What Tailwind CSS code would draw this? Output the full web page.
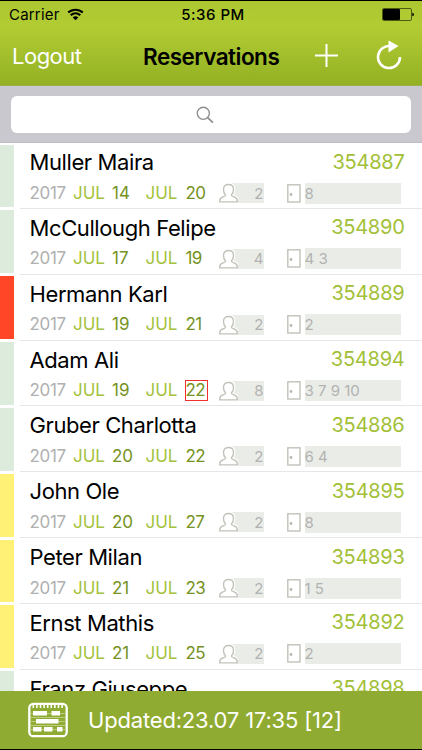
<!DOCTYPE html>
<html lang="en">
<head>
<meta charset="utf-8">
<title>Reservations</title>
<script src="https://cdn.jsdelivr.net/npm/@tailwindcss/browser@4"></script>
</head>
<body class="w-[422px] h-[750px] overflow-hidden bg-white font-[Inter,'Liberation_Sans',sans-serif] text-black">
<div class="flex flex-col w-[422px] h-[750px] border-y border-black overflow-hidden">
  <header class="shrink-0 h-[85px] bg-linear-to-b from-[#abc62f] via-[#b2cd33] via-30% to-[#93b023] border-b border-[#9caf4c]">
    <div class="h-[27px] grid grid-cols-3 items-center pl-[9px] pr-[8px] text-[15px] leading-none">
      <div class="flex items-center gap-[7px]">
        <span class="tracking-[0.2px]">Carrier</span>
        <svg class="w-[17px] h-[13px] -mt-px" viewBox="0 0 17 13" fill="none" stroke="#000" stroke-width="2.1"><path d="M1.2 4.6C5.3.7 11.7.7 15.8 4.6M3.7 7.2c2.8-2.5 6.8-2.5 9.6 0"/><path d="M8.5 12.2 5.7 9.4c1.6-1.4 4-1.4 5.6 0z" fill="#000" stroke="none"/></svg>
      </div>
      <span class="text-center font-medium tracking-[0.5px] whitespace-nowrap pl-[3px]">5:36 PM</span>
      <div class="flex justify-end">
        <svg class="w-[32px] h-[13px]" viewBox="0 0 32 13"><rect x=".5" y=".5" width="29" height="12" rx="1.5" fill="none" stroke="#4d5b12"/><rect x="1" y="1" width="17" height="11" rx="1"/><path d="M30.3 4.7q1.7 0 1.7 1.8t-1.7 1.8z"/></svg>
      </div>
    </div>
    <div class="h-[57px] flex items-center pl-[12px] pr-[20px]">
      <span class="w-[131px] text-[22px] leading-none text-white tracking-[-0.5px] -mt-[2px]">Logout</span>
      <h1 class="w-[172px] text-[22.5px] leading-none font-semibold tracking-[-0.5px] mt-px">Reservations</h1>
      <svg class="w-[23px] h-[23px] -mt-[3px]" viewBox="0 0 23 23" stroke="#fff" stroke-width="2"><path d="M11.5 0v23M0 11.5h23"/></svg>
      <svg class="w-[26px] h-[30px] ml-auto -mt-[3px]" viewBox="0 0 26 30"><path d="M14.5 6.2A11 11 0 1 0 24 17" fill="none" stroke="#fff" stroke-width="2.5"/><path d="M12.5 .5v12l10-6.500z" fill="#fff"/></svg>
    </div>
  </header>

  <div class="shrink-0 h-[57px] bg-[#c9c8cf] border-b border-[#bebdc4] px-[11px] pt-[10px]">
    <div class="h-[37px] rounded-[6px] bg-white flex items-center justify-center">
      <svg class="w-[18px] h-[18px] -ml-[12px]" viewBox="0 0 19 19" fill="none" stroke="#8e8e93" stroke-width="1.4"><circle cx="7.7" cy="7.7" r="6.4"/><path d="m12.3 12.3 5.6 5.3" stroke-width="1.9"/></svg>
    </div>
  </div>

  <main id="list" class="grow min-h-0 overflow-hidden"></main>

  <footer class="shrink-0 h-[58px] bg-[#90ab31] flex items-center pl-[28px]">
    <svg class="w-[40px] h-[36px]" viewBox="0 0 40 36"><rect x="1.3" y="1.8" width="37.4" height="32.4" rx="4" fill="none" stroke="#fff" stroke-width="2.3"/><path d="M4.500 4.500h32" stroke="#fff" stroke-width="3" stroke-dasharray="1.600 2"/><path d="M3 11.500h34M3 19.500h34M3 27.500h34M3 15.500h34M3 23.500h34" stroke="#fff" stroke-opacity=".5" stroke-width=".8"/><path d="M5 9h14v4.500H5zM23.500 9h8.500v4.500h-8.500zM8 17h22.500v4.500H8zM5 25h8.500v4.500H5zM16 25h8.500v4.500H16zM29 25h5.500v4.500H29z" fill="#fff"/></svg>
    <span class="ml-[20px] py-[6px] text-[22px] leading-none text-white whitespace-nowrap tracking-[-0.18px]">Updated:23.07 17:35 [12]</span>
  </footer>
</div>

<script>
const rows = [
  ['bg-[#dcebdc]', 'Muller Maira', '354887', '14', '20', 2, '8'],
  ['bg-[#dcebdc]', 'McCullough Felipe', '354890', '17', '19', 4, '4 3'],
  ['bg-[#ff4626]', 'Hermann Karl', '354889', '19', '21', 2, '2'],
  ['bg-[#dcebdc]', 'Adam Ali', '354894', '19', '22', 8, '3 7 9 10', true],
  ['bg-[#dcebdc]', 'Gruber Charlotta', '354886', '20', '22', 2, '6 4'],
  ['bg-[#fff176]', 'John Ole', '354895', '20', '27', 2, '8'],
  ['bg-[#fff176]', 'Peter Milan', '354893', '21', '23', 2, '1 5'],
  ['bg-[#fff176]', 'Ernst Mathis', '354892', '21', '25', 2, '2']
];
const lastRow = ['bg-[#dcebdc]', 'Franz Giuseppe', '354898'];
const person = 'M6.6 12C5.2 10.7 4.5 9 4.5 6.4 4.5 3.2 6.500 1.500 9.500 1.500S14.500 3.200 14.500 6.400c0 2.600-.7 4.300-2.100 5.600.1 1.300 1 1.500 2.800 2 2.500.7 3.200 2 3.100 4.900H.7c-.1-2.900.6-4.200 3.100-4.900 1.800-.5 2.700-.7 2.800-2z';

const renderRow = ([stripe, name, id], details = '') => `
  <article class="h-[65.85px] flex">
    <div class="w-[13.5px] shrink-0 mt-[1.5px] mb-[1.5px] ${stripe}"></div>
    <div class="grow ml-[6.5px] pl-[9.5px] border-b border-[#e6e5ea]">
      <div class="h-[38px] flex items-center justify-between pr-[17.5px] leading-none">
        <span class="text-[22px] tracking-[-0.4px] whitespace-nowrap">${name}</span>
        <span class="text-[20px] text-[#a2c037] tracking-[-0.25px] -mt-px">${id}</span>
      </div>${details}
    </div>
  </article>`;

const renderDetails = ([, , , from, to, guests, rooms, alert]) => `
      <div class="h-[23px] mt-[0.5px] flex items-center leading-none text-[17px] whitespace-nowrap">
        <span class="w-[43.5px] text-[#b0b0b0] tracking-[-0.3px]">2017</span>
        <span class="w-[39px] text-[#a4c23c]">JUL</span>
        <span class="w-[33.5px] text-[#759222]">${from}</span>
        <span class="w-[39px] text-[#a4c23c]">JUL</span>
        <span class="w-[23px] h-[21px] flex items-center text-[#759222] border ${alert ? 'border-[#f0302c]' : 'border-transparent'}"><span class="tracking-[-0.7px]">${to}</span></span>
        <svg class="relative w-[19px] h-[20px] ml-[11px] shrink-0" viewBox="0 0 19 20" fill="#fff"><path d="${person}" stroke="#fff" stroke-width="3.5"/><path d="${person}" stroke="#c2c2ba" stroke-width="1.4"/></svg>
        <span class="w-[32px] h-[20px] -ml-[6px] bg-[#eaede7] text-[#b2b2b2] text-[15px] flex items-center justify-end">${guests}</span>
        <svg class="w-[14px] h-[19px] ml-[23px] shrink-0" viewBox="0 0 14 19" fill="none"><rect x=".8" y=".8" width="12.2" height="17.2" stroke="#c2c2ba" stroke-width="1.4"/><circle cx="4" cy="10.5" r="1.4" fill="#b9b9b2"/></svg>
        <span class="w-[96px] h-[21px] ml-[4px] bg-[#eaede7] text-[#b2b2b2] text-[15px] flex items-center">${rooms}</span>
      </div>`;

document.getElementById('list').innerHTML = rows.map(r => renderRow(r, renderDetails(r))).join('') + renderRow(lastRow);
</script>
</body>
</html>
